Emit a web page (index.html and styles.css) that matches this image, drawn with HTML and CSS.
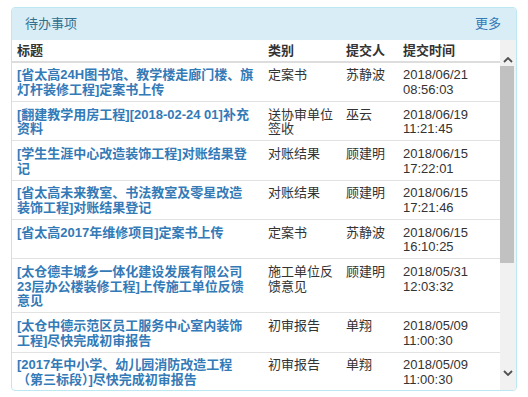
FILE: index.html
```html
<!DOCTYPE html>
<html lang="zh-CN">
<head>
<meta charset="utf-8">
<title>待办事项</title>
<link rel="stylesheet" href="styles.css">
</head>
<body>
<div class="panel">
  <div class="panel-heading">
    <span class="panel-title">待办事项</span>
    <a class="more" href="#">更多</a>
  </div>
  <div class="panel-body">
    <div class="table-wrap">
      <table class="todo">
        <colgroup>
          <col class="c-title"><col class="c-type"><col class="c-user"><col class="c-time">
        </colgroup>
        <thead>
          <tr><th>标题</th><th>类别</th><th>提交人</th><th>提交时间</th></tr>
        </thead>
        <tbody>
          <tr><td class="t"><a href="#">[省太高24H图书馆、教学楼走廊门楼、旗<br>灯杆装修工程]定案书上传</a></td><td>定案书</td><td>苏静波</td><td>2018/06/21 08:56:03</td></tr>
          <tr><td class="t"><a href="#">[翻建教学用房工程][2018-02-24 01]补充<br>资料</a></td><td>送协审单位签收</td><td>巫云</td><td>2018/06/19 11:21:45</td></tr>
          <tr><td class="t"><a href="#">[学生生涯中心改造装饰工程]对账结果登<br>记</a></td><td>对账结果</td><td>顾建明</td><td>2018/06/15 17:22:01</td></tr>
          <tr><td class="t"><a href="#">[省太高未来教室、书法教室及零星改造<br>装饰工程]对账结果登记</a></td><td>对账结果</td><td>顾建明</td><td>2018/06/15 17:21:46</td></tr>
          <tr><td class="t"><a href="#">[省太高2017年维修项目]定案书上传</a></td><td>定案书</td><td>苏静波</td><td>2018/06/15 16:10:25</td></tr>
          <tr><td class="t"><a href="#">[太仓德丰城乡一体化建设发展有限公司<br>23层办公楼装修工程]上传施工单位反馈<br>意见</a></td><td>施工单位反馈意见</td><td>顾建明</td><td>2018/05/31 12:03:32</td></tr>
          <tr><td class="t"><a href="#">[太仓中德示范区员工服务中心室内装饰<br>工程]尽快完成初审报告</a></td><td>初审报告</td><td>单翔</td><td>2018/05/09 11:00:30</td></tr>
          <tr><td class="t"><a href="#">[2017年中小学、幼儿园消防改造工程<br>（第三标段）]尽快完成初审报告</a></td><td>初审报告</td><td>单翔</td><td>2018/05/09 11:00:30</td></tr>
        </tbody>
      </table>
    </div>
    <div class="scrollbar">
      <div class="sb-btn sb-up">
        <svg width="10" height="6" viewBox="0 0 10 6"><path d="M1 5 L5 1 L9 5" fill="none" stroke="#505050" stroke-width="1.8"/></svg>
      </div>
      <div class="sb-track">
        <div class="sb-thumb"></div>
      </div>
      <div class="sb-btn sb-down">
        <svg width="10" height="6" viewBox="0 0 10 6"><path d="M1 1 L5 5 L9 1" fill="none" stroke="#505050" stroke-width="1.8"/></svg>
      </div>
    </div>
  </div>
</div>
</body>
</html>
```
FILE: styles.css
```css
html, body {
  margin: 0;
  padding: 0;
  background: #fff;
}
body {
  padding: 7px 11px 0 11px;
  font-family: "Liberation Sans", "Noto Sans CJK SC", sans-serif;
  font-size: 13px;
  line-height: 14.6px;
  color: #333;
}
.panel {
  width: 504px;
  border: 1px solid #bce8f1;
  border-radius: 4px;
  overflow: hidden;
  background: #fff;
}
.panel-heading {
  height: 32px;
  background: #d9edf7;
  display: flex;
  align-items: center;
  justify-content: space-between;
  padding: 0 15px 0 13px;
  color: #31708f;
  font-size: 13px;
}
.more {
  color: #337ab7;
  text-decoration: none;
}
.panel-body {
  display: flex;
  height: 350px;
}
.table-wrap {
  flex: 1;
  overflow: hidden;
}
.todo {
  width: 488px;
  table-layout: fixed;
  border-collapse: collapse;
}
.c-title { width: 251px; }
.c-type { width: 78px; }
.c-user { width: 57px; }
.c-time { width: 102px; }
.todo th, .todo td {
  padding: 5.6px 5px 3.6px;
  text-align: left;
  vertical-align: top;
  word-break: break-all;
}
.todo th {
  font-weight: bold;
  color: #333;
  border-bottom: 2px solid #ddd;
  padding-top: 4px;
  padding-bottom: 2px;
}
.todo td {
  border-bottom: 1px solid #e2e2e2;
  color: #333;
}
.todo td.t {
  white-space: nowrap;
}
.todo td:last-child {
  word-break: normal;
}
.todo td a {
  color: #337ab7;
  font-weight: bold;
  text-decoration: none;
}
.scrollbar {
  width: 16px;
  background: #f1f1f1;
  display: flex;
  flex-direction: column;
}
.sb-btn {
  display: flex;
  justify-content: center;
}
.sb-up {
  height: 25px;
  align-items: flex-end;
}
.sb-up svg { margin-bottom: 2px; }
.sb-track {
  flex: 1;
  padding-top: 1px;
}
.sb-thumb {
  width: 14px;
  height: 197px;
  background: #c1c1c1;
}
.sb-down {
  height: 34px;
  align-items: center;
}
```
